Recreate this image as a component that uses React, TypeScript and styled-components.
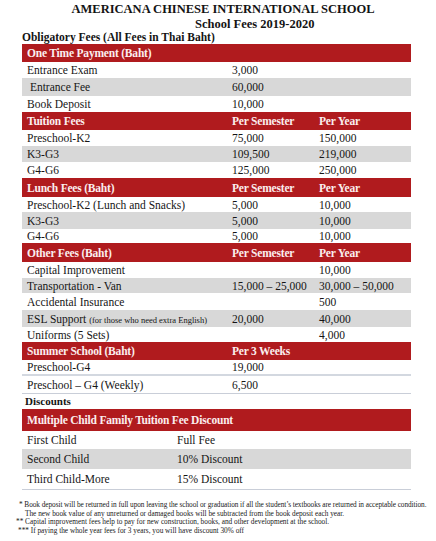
import styled, { createGlobalStyle } from "styled-components";

type Row = {
  cells: string[];
  h: number;
  head?: boolean;
  gray?: boolean;
  line?: boolean;
};

const feeRows: Row[] = [
  { cells: ["One Time Payment (Baht)", "", ""], h: 18, head: true },
  { cells: ["Entrance Exam", "3,000", ""], h: 16 },
  { cells: ["\u00a0Entrance Fee", "60,000", ""], h: 18, gray: true },
  { cells: ["Book Deposit", "10,000", ""], h: 16 },
  { cells: ["Tuition Fees", "Per Semester", "Per Year"], h: 18, head: true },
  { cells: ["Preschool-K2", "75,000", "150,000"], h: 16 },
  { cells: ["K3-G3", "109,500", "219,000"], h: 16, gray: true },
  { cells: ["G4-G6", "125,000", "250,000"], h: 16 },
  { cells: ["Lunch Fees (Baht)", "Per Semester", "Per Year"], h: 19, head: true },
  { cells: ["Preschool-K2 (Lunch and Snacks)", "5,000", "10,000"], h: 15 },
  { cells: ["K3-G3", "5,000", "10,000"], h: 17, gray: true },
  { cells: ["G4-G6", "5,000", "10,000"], h: 14 },
  { cells: ["Other Fees (Baht)", "Per Semester", "Per Year"], h: 19, head: true },
  { cells: ["Capital Improvement", "", "10,000"], h: 16 },
  { cells: ["Transportation - Van", "15,000 \u2013 25,000", "30,000 \u2013 50,000"], h: 15, gray: true },
  { cells: ["Accidental Insurance", "", "500"], h: 17 },
  { cells: ["ESL Support", "20,000", "40,000"], h: 17, gray: true },
  { cells: ["Uniforms (5 Sets)", "", "4,000"], h: 15 },
  { cells: ["Summer School (Baht)", "Per 3 Weeks", ""], h: 18, head: true },
  { cells: ["Preschool-G4", "19,000", ""], h: 16, line: true },
  { cells: ["Preschool \u2013 G4 (Weekly)", "6,500", ""], h: 17 },
];

const discountRows: Row[] = [
  { cells: ["First Child", "Full Fee"], h: 18 },
  { cells: ["Second Child", "10% Discount"], h: 20, gray: true },
  { cells: ["Third Child-More", "15% Discount"], h: 20 },
];

const Global = createGlobalStyle`
  html, body {
    margin: 0;
    padding: 0;
    background: #ffffff;
  }
  body {
    font-family: "Liberation Serif", "Times New Roman", serif;
    color: #141414;
  }
`;

const Page = styled.div`
  width: 436px;
  height: 541px;
  overflow: hidden;
  padding-top: 2px;
  box-sizing: border-box;
`;

const Title = styled.h1`
  margin: 0;
  font-size: 12.5px;
  line-height: 15px;
  font-weight: bold;
  text-align: center;
  padding-left: 10px;
`;

const SubTitle = styled.h2`
  margin: 0;
  font-size: 12.5px;
  line-height: 14px;
  font-weight: bold;
  padding-left: 195px;
`;

const SectionLabel = styled.div<{ $pad: number; $size: number; $h: number }>`
  padding-left: ${(p) => p.$pad}px;
  font-size: ${(p) => p.$size}px;
  line-height: ${(p) => p.$h}px;
  font-weight: bold;
`;

const Table = styled.div`
  margin-left: 22px;
  width: 389px;
  border: 1px solid #c9ced8;
  border-top: none;
  box-sizing: border-box;
`;

const TableRow = styled.div<{ $cols: string; $h: number; $head?: boolean; $gray?: boolean; $line?: boolean }>`
  display: grid;
  grid-template-columns: ${(p) => p.$cols};
  align-items: center;
  height: ${(p) => p.$h}px;
  padding-left: 5px;
  margin: 0 -1px;
  background: ${(p) => (p.$head ? "#b01b1e" : p.$gray ? "#d8d8d8" : "#ffffff")};
  color: ${(p) => (p.$head ? "#fbeeee" : "#151515")};
  font-size: 11.5px;
  font-weight: ${(p) => (p.$head ? "bold" : "normal")};
  letter-spacing: ${(p) => (p.$head ? "-0.2px" : "0")};
  border-bottom: ${(p) => (p.$line ? "2px solid #d3d8e0" : "none")};
  box-sizing: border-box;
  white-space: nowrap;
`;

const Small = styled.span`
  font-size: 8.5px;
`;

const Footnotes = styled.div`
  margin-top: 11px;
  font-size: 7.3px;
  line-height: 8.7px;
  color: #202020;
`;

const Note = styled.div<{ $pad: number; $tight?: boolean }>`
  padding-left: ${(p) => p.$pad}px;
  letter-spacing: ${(p) => (p.$tight ? "-0.06px" : "0")};
  white-space: nowrap;
`;

function FeeRow({ row, cols }: { row: Row; cols: string }) {
  return (
    <TableRow $cols={cols} $h={row.h} $head={row.head} $gray={row.gray} $line={row.line}>
      {row.cells.map((c, i) => (
        <span key={i}>
          {c === "ESL Support" ? (
            <>
              ESL Support <Small>(for those who need extra English)</Small>
            </>
          ) : (
            c
          )}
        </span>
      ))}
    </TableRow>
  );
}

export default function App() {
  return (
    <Page>
      <Global />
      <Title>AMERICANA CHINESE INTERNATIONAL SCHOOL</Title>
      <SubTitle>School Fees 2019-2020</SubTitle>
      <SectionLabel $pad={22} $size={11.5} $h={13}>
        Obligatory Fees (All Fees in Thai Baht)
      </SectionLabel>
      <Table>
        {feeRows.map((r, i) => (
          <FeeRow key={i} row={r} cols="205px 87px 1fr" />
        ))}
      </Table>
      <SectionLabel $pad={25} $size={11} $h={15}>
        Discounts
      </SectionLabel>
      <Table>
        <TableRow $cols="1fr" $h={22} $head>
          <span>Multiple Child Family Tuition Fee Discount</span>
        </TableRow>
        {discountRows.map((r, i) => (
          <FeeRow key={i} row={r} cols="150px 1fr" />
        ))}
      </Table>
      <Footnotes>
        <Note $pad={19} $tight>
          * Book deposit will be returned in full upon leaving the school or graduation if all the student&rsquo;s textbooks are returned in acceptable condition.
        </Note>
        <Note $pad={25}>
          The new book value of any unreturned or damaged books will be subtracted from the book deposit each year.
        </Note>
        <Note $pad={16}>** Capital improvement fees help to pay for new construction, books, and other development at the school.</Note>
        <Note $pad={18}>*** If paying the whole year fees for 3 years, you will have discount 30% off</Note>
      </Footnotes>
    </Page>
  );
}
